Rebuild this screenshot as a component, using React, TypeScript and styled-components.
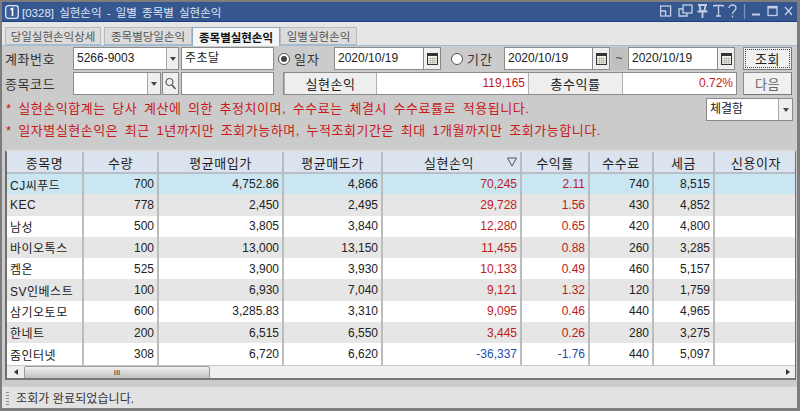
import React from "react";
import styled, { createGlobalStyle } from "styled-components";

const Global = createGlobalStyle`
  html, body { margin: 0; padding: 0; background: #8a8a8a; }
  * { box-sizing: border-box; }
  body { font-family: "Liberation Sans", "Noto Sans CJK KR", sans-serif; font-size: 12px; color: #222; }
`;

const Win = styled.div`
  width: 800px; height: 411px; display: flex; flex-direction: column;
  background: #cbcbcb; border: 2px solid #7d7d7d; border-bottom-width: 3px; border-right-width: 3px; overflow: hidden;
`;
const TitleBar = styled.div`
  height: 20px; flex: none; background: #36568f; border-bottom: 1px solid #1c3f86; display: flex; align-items: center; padding: 0 1px 0 3px; color: #e8eef8;
`;
const TitleText = styled.span`
  margin-left: 3px; font-size: 11.5px; word-spacing: 2px; white-space: nowrap; flex: 1; color: #dfe7f5;
`;
const Tabs = styled.div`
  height: 24px; flex: none; background: #e6e6e6; display: flex; align-items: flex-end; padding: 0 0 0 3px; border-bottom: 1px solid #a5bcd0;
`;
const Tab = styled.div<{ $w: number; $ml?: number; $active?: boolean }>`
  width: ${p => p.$w}px; margin-left: ${p => p.$ml ?? 0}px; height: ${p => p.$active ? 19 : 18}px; display: flex; align-items: center; justify-content: center;
  font-size: 11.5px; white-space: nowrap; color: ${p => p.$active ? "#111" : "#555"}; font-weight: ${p => p.$active ? 700 : 400};
  background: ${p => p.$active ? "#f4f5f6" : "#dcdcdc"};
  border: 1px solid ${p => p.$active ? "#8fa9bf" : "#b4bcc2"}; border-bottom: ${p => p.$active ? "none" : "1px solid #a5bcd0"};
  margin-bottom: ${p => p.$active ? "-1px" : "0"};
`;
const Toolbar = styled.div`
  flex: none; padding: 1px 3px 0 3px; display: flex; flex-direction: column; gap: 2px; height: 48px;
`;
const Row = styled.div`display: flex; align-items: center; height: 23px;`;
const Label = styled.div<{ $w: number }>`width: ${p => p.$w}px; flex: none; font-size: 13px; color: #333; letter-spacing: .6px; white-space: nowrap;`;
const Input = styled.div<{ $w: number; $ml?: number }>`
  width: ${p => p.$w}px; height: 23px; flex: none; margin-left: ${p => p.$ml ?? 0}px; background: #fff; border: 1px solid #8a8a8a; padding: 0 2px 0 3px;
  line-height: 21px; font-size: 12px; color: #222; letter-spacing: .5px; white-space: nowrap; overflow: hidden;
`;
const Combo = styled.div<{ $w: number; $ml?: number }>`
  width: ${p => p.$w}px; margin-left: ${p => p.$ml ?? 0}px; height: 23px; flex: none; display: flex; background: #fff; border: 1px solid #8a8a8a;
  font-size: 12px; line-height: 21px; color: #222;
`;
const ComboText = styled.div`flex: 1; padding-left: 3px; white-space: nowrap;`;
const SqBtn = styled.div<{ $w?: number }>`
  width: ${p => p.$w ?? 13}px; flex: none; display: flex; align-items: center; justify-content: center; background: #efefef; border-left: 1px solid #a8a8a8;
`;
const SearchBtn = styled.div`
  width: 17px; height: 23px; flex: none; margin-left: 1px; display: flex; align-items: center; justify-content: center; background: #efefef; border: 1px solid #8a8a8a;
`;
const Arrow = styled.span`width: 0; height: 0; border-left: 3.5px solid transparent; border-right: 3.5px solid transparent; border-top: 4px solid #444;`;
const Radio = styled.span<{ $on?: boolean; $ml: number }>`
  width: 12px; height: 12px; flex: none; margin-left: ${p => p.$ml}px; border-radius: 50%; background: #fff; border: 1px solid #555; display: flex; align-items: center; justify-content: center;
  &::after { content: ""; width: 6px; height: 6px; border-radius: 50%; background: ${p => p.$on ? "#444" : "transparent"}; }
`;
const RadioLabel = styled.span<{ $w: number }>`width: ${p => p.$w}px; margin-left: 4px; flex: none; font-size: 13px; color: #333; letter-spacing: 1px; white-space: nowrap;`;
const Tilde = styled.div`width: 16px; height: 23px; flex: none; margin: 0 1px; background: #c0c0c0; text-align: center; line-height: 23px; font-size: 12px; color: #444;`;
const Btn = styled.div<{ $ml: number; $focus?: boolean; $dim?: boolean }>`
  width: 49px; height: 23px; flex: none; margin-left: ${p => p.$ml}px; background: #f0f0f0; border: 1px solid #8c8c8c; border-right-color: #777; border-bottom-color: #777;
  display: flex; align-items: center; justify-content: center; font-size: 13px; letter-spacing: .6px; color: ${p => p.$dim ? "#666" : "#222"}; position: relative;
  ${p => p.$focus ? `&::after { content: ""; position: absolute; inset: 1px; border: 1px dotted #444; }` : ""}
`;
const Summary = styled.div`
  width: 454px; height: 23px; margin-left: 9px; flex: none; display: flex; border: 1px solid #8a8a8a; background: #fff;
`;
const SumLabel = styled.div<{ $w: number }>`
  width: ${p => p.$w}px; flex: none; background: #eeeeee; border-right: 1px solid #b0b0b0; border-left: 1px solid #b0b0b0; display: flex; align-items: center; justify-content: center; font-size: 13px; letter-spacing: .5px; color: #222;
`;
const SumValue = styled.div<{ $w: number }>`
  width: ${p => p.$w}px; flex: none; text-align: right; line-height: 21px; font-size: 12px; color: #c01a1a; padding-right: 3px;
`;
const Notes = styled.div`
  flex: none; height: 56px; padding: 4px 4px 0 4px; display: grid; grid-template-columns: 1fr 87px; grid-template-rows: 22px 22px;
`;
const Note = styled.div`font-size: 13px; line-height: 22px; color: #c81818; letter-spacing: .55px; word-spacing: 2.4px; white-space: nowrap;`;
const GridBox = styled.div`
  flex: none; height: 230px; margin: 0 1px 0 3px; border: 2px solid #6f6f6f; border-right-width: 1px; border-bottom-color: #777; background: #f2f2f2; border-top-color: #dedede; display: flex; flex-direction: column; overflow: hidden;
`;
const Table = styled.table`
  border-collapse: collapse; table-layout: fixed; width: 791px; flex: none;
`;
const Th = styled.th<{ $r?: boolean }>`
  height: 21px; padding: 0 ${p => p.$r ? 5 : 0}px 0 0; background: #dbe4ee; font-weight: 400; font-size: 13px; color: #222; letter-spacing: .5px; text-align: center;
  border-right: 2px solid #b4bdc6; border-bottom: 2px solid #b8bfc8; white-space: nowrap; position: relative;
`;
const Tr = styled.tr<{ $bg: string }>`background: ${p => p.$bg};`;
const Td = styled.td<{ $c?: string; $l?: boolean }>`
  height: 21.3px; padding: 0 ${p => p.$l ? 0 : 3}px 0 ${p => p.$l ? 3 : 0}px; text-align: ${p => p.$l ? "left" : "right"}; font-size: 12px; color: ${p => p.$c ?? "#222"};
  border-right: 2px solid #bcbcbc; white-space: nowrap; letter-spacing: ${p => p.$l ? ".5px" : "0"};
`;
const Sort = styled.svg`position: absolute; right: 2px; top: 4px;`;
const HScroll = styled.div`
  margin-top: auto; height: 15px; flex: none; background: #efefef; border-top: 1px solid #c8c8c8; display: flex; align-items: center; justify-content: space-between; padding: 0 5px 1px 7px; position: relative;
`;
const Thumb = styled.div`
  position: absolute; left: 17px; top: 0; width: 186px; height: 14px; background: linear-gradient(#f0f0f0, #bcbcbc); border: 1px solid #9a9a9a; border-radius: 2px; display: flex; align-items: center; justify-content: center; font-size: 8px; color: #333;
`;
const ArrL = styled.span`border-top: 3px solid transparent; border-bottom: 3px solid transparent; border-right: 4px solid #333;`;
const ArrR = styled.span`border-top: 3px solid transparent; border-bottom: 3px solid transparent; border-left: 4px solid #333;`;
const Status = styled.div`
  flex: 1; margin-top: 6px; background: #e2e2e2; border-top: 1px solid #d2d2d2; display: flex; align-items: center; padding-left: 4px; font-size: 12px; color: #333; letter-spacing: .1px;
`;
const Grip = styled.span`width: 3px; height: 14px; flex: none; margin-right: 7px; background-image: radial-gradient(#8a8a8a 0.6px, transparent 0.7px); background-size: 2px 3px;`;

const Cal = () => (
  <svg width="11" height="13" viewBox="0 0 11 13">
    <rect x="0.5" y="1.5" width="10" height="11" fill="#f6f4e6" stroke="#333" />
    <rect x="0" y="1" width="11" height="3" fill="#333" />
    <path d="M1 6.5h9M1 8.5h9M1 10.5h9M3.5 5v7M5.5 5v7M7.5 5v7" stroke="#aaa" strokeWidth=".6" />
  </svg>
);

const Calendar = styled(SqBtn)`width: 17px; border-left: 1px solid #8a8a8a;`;
const DateBox = ({ w }: { w: number }) => (
  <Combo $w={w}>
    <ComboText>2020/10/19</ComboText>
    <Calendar><Cal /></Calendar>
  </Combo>
);

const c = { r: "#c01a1a", b: "#1a50b0" };
const widths = [76, 75, 125, 99, 139, 68, 64, 61, 84];
const heads = ["종목명", "수량", "평균매입가", "평균매도가", "실현손익", "수익률", "수수료", "세금", "신용이자"];
const rows = [
  ["CJ씨푸드", "700", "4,752.86", "4,866", "70,245", "2.11", "740", "8,515"],
  ["KEC", "778", "2,450", "2,495", "29,728", "1.56", "430", "4,852"],
  ["남성", "500", "3,805", "3,840", "12,280", "0.65", "420", "4,800"],
  ["바이오톡스", "100", "13,000", "13,150", "11,455", "0.88", "260", "3,285"],
  ["켐온", "525", "3,900", "3,930", "10,133", "0.49", "460", "5,157"],
  ["SV인베스트", "100", "6,930", "7,040", "9,121", "1.32", "120", "1,759"],
  ["삼기오토모", "600", "3,285.83", "3,310", "9,095", "0.46", "440", "4,965"],
  ["한네트", "200", "6,515", "6,550", "3,445", "0.26", "280", "3,275"],
  ["줌인터넷", "308", "6,720", "6,620", "-36,337", "-1.76", "440", "5,097"],
];

export default function App() {
  return (
    <>
      <Global />
      <Win>
        <TitleBar>
          <svg width="14" height="14" viewBox="0 0 14 14">
            <rect x="0.7" y="0.7" width="12.6" height="12.6" rx="2.5" fill="#3e5f98" stroke="#dde6f5" strokeWidth="1.3" />
            <path d="M5.5 4.5l2-1v7.5" fill="none" stroke="#fff" strokeWidth="1.6" />
          </svg>
          <TitleText>[0328] 실현손익 - 일별 종목별 실현손익</TitleText>
          <svg width="136" height="18" viewBox="0 0 136 18">
            <g fill="none" stroke="#c3cfe4" strokeWidth="1.3">
              <rect x="0.6" y="3" width="10" height="10" />
              <path d="M0.6 8h5v5" />
              <rect x="23" y="2" width="9" height="8" />
              <path d="M23 6h-4v7h8v-3" />
              <path d="M38 2h9M39.5 2l1 6h4l1-6M37.5 8.5h10M42.5 9v6" strokeWidth="1.8" />
              <path d="M54 4V2.5h9V4M58.5 3v10M56 13h5" />
              <path d="M69 5c0-4 7-4 7 0 0 3-3.5 3-3.5 6" />
              <path d="M72.5 12.5v2" />
              <path d="M84.5 1v15" stroke="#7d92b8" />
              <path d="M92 11.5h8" strokeWidth="2" />
              <rect x="108" y="3.5" width="9" height="9" />
              <path d="M108 4.5h9" strokeWidth="2" />
              <path d="M125 4l7 8M132 4l-7 8" />
            </g>
          </svg>
        </TitleBar>
        <Tabs>
          <Tab $w={96}>당일실현손익상세</Tab>
          <Tab $w={88} $ml={3}>종목별당일손익</Tab>
          <Tab $w={88} $active>종목별실현손익</Tab>
          <Tab $w={77}>일별실현손익</Tab>
        </Tabs>
        <Toolbar>
          <Row>
            <Label $w={68}>계좌번호</Label>
            <Combo $w={106}><ComboText>5266-9003</ComboText><SqBtn $w={12}><Arrow /></SqBtn></Combo>
            <Input $w={93} $ml={2}>주초달</Input>
            <Radio $on $ml={4} />
            <RadioLabel $w={40}>일자</RadioLabel>
            <DateBox w={107} />
            <Radio $ml={10} />
            <RadioLabel $w={37}>기간</RadioLabel>
            <DateBox w={106} />
            <Tilde>~</Tilde>
            <DateBox w={107} />
            <Btn $ml={8} $focus>조회</Btn>
          </Row>
          <Row>
            <Label $w={68}>종목코드</Label>
            <Combo $w={88}><ComboText /><SqBtn $w={13}><Arrow /></SqBtn></Combo>
            <SearchBtn>
              <svg width="13" height="13" viewBox="0 0 13 13"><circle cx="5.5" cy="5" r="3.6" fill="none" stroke="#444" /><path d="M8 8l3.5 4" stroke="#444" strokeWidth="1.4" /></svg>
            </SearchBtn>
            <Input $w={93} $ml={2} />
            <Summary>
              <SumLabel $w={93}>실현손익</SumLabel>
              <SumValue $w={151}>119,165</SumValue>
              <SumLabel $w={95}>총수익률</SumLabel>
              <SumValue $w={113}>0.72%</SumValue>
            </Summary>
            <Btn $ml={6} $dim>다음</Btn>
          </Row>
        </Toolbar>
        <Notes>
          <Note>* 실현손익합계는 당사 계산에 의한 추정치이며, 수수료는 체결시 수수료률로 적용됩니다.</Note>
          <Combo $w={87}><ComboText>체결함</ComboText><SqBtn $w={14}><Arrow /></SqBtn></Combo>
          <Note>* 일자별실현손익은 최근 1년까지만 조회가능하며, 누적조회기간은 최대 1개월까지만 조회가능합니다.</Note>
        </Notes>
        <GridBox>
          <Table>
            <colgroup>{widths.map((w, i) => <col key={i} width={w} />)}</colgroup>
            <thead>
              <tr>
                {heads.map((h, i) => (
                  <Th key={h} $r={i === 4}>
                    {h}
                    {i === 4 && <Sort width="12" height="12" viewBox="0 0 12 12"><path d="M1.5 2h9L6 10z" fill="none" stroke="#555" /></Sort>}
                  </Th>
                ))}
              </tr>
            </thead>
            <tbody>
              {rows.map((r, i) => {
                const col = r[4].startsWith("-") ? c.b : c.r;
                return (
                  <Tr key={r[0]} $bg={i === 0 ? "#c9e6f2" : i % 2 ? "#e6e6e6" : "#ffffff"}>
                    <Td $l>{r[0]}</Td>
                    <Td>{r[1]}</Td>
                    <Td>{r[2]}</Td>
                    <Td>{r[3]}</Td>
                    <Td $c={col}>{r[4]}</Td>
                    <Td $c={col}>{r[5]}</Td>
                    <Td>{r[6]}</Td>
                    <Td>{r[7]}</Td>
                    <Td />
                  </Tr>
                );
              })}
            </tbody>
          </Table>
          <HScroll>
            <ArrL />
            <Thumb>III</Thumb>
            <ArrR />
          </HScroll>
        </GridBox>
        <Status><Grip />조회가 완료되었습니다.</Status>
      </Win>
    </>
  );
}
